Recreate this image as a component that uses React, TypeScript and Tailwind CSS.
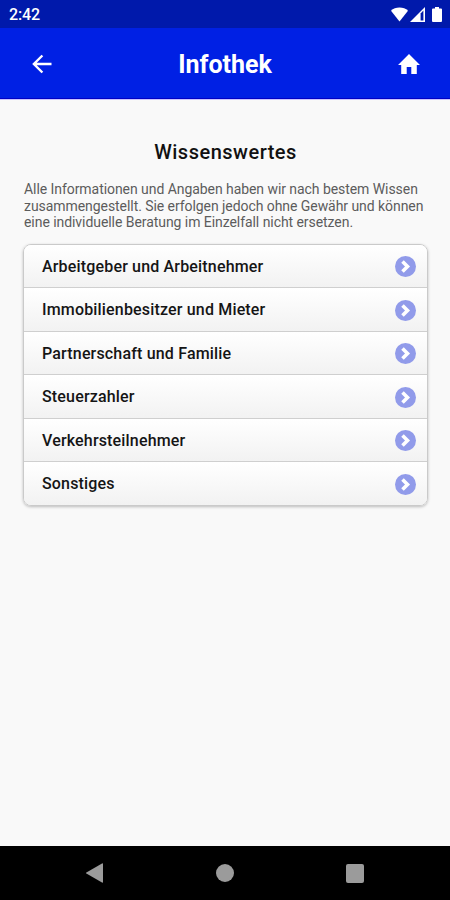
const topics = [
  "Arbeitgeber und Arbeitnehmer",
  "Immobilienbesitzer und Mieter",
  "Partnerschaft und Familie",
  "Steuerzahler",
  "Verkehrsteilnehmer",
  "Sonstiges",
];

function StatusBar() {
  return (
    <div className="flex h-7 items-center justify-between bg-[#0019ab] pl-[9px] pr-2 text-white">
      <span className="mt-0.5 text-base font-medium leading-none tracking-[-0.1px]">2:42</span>
      <div className="flex items-center">
        <svg className="h-[15px] w-[17px]" viewBox="0 0 18 15" fill="currentColor">
          <path d="M0 3.4C2.3 1.2 5.4 0 9 0s6.700 1.200 9 3.400L9 15z" />
        </svg>
        <svg className="ml-0.5 h-[15px] w-[15px]" viewBox="0 0 15 15">
          <path d="M0 15 15 0v15z" fill="currentColor" />
          <path d="M10.600 6.400 13.400 3.600v10h-2.800z" fill="#0019ab" />
        </svg>
        <svg className="ml-[7px] h-[15px] w-[10px]" viewBox="0 0 10 15" fill="currentColor">
          <path d="M3 0h4v1.500h2a1 1 0 0 1 1 1V14a1 1 0 0 1-1 1H1a1 1 0 0 1-1-1V2.500a1 1 0 0 1 1-1h2z" />
        </svg>
      </div>
    </div>
  );
}

function Header() {
  return (
    <header className="flex h-[71px] items-center justify-between border-b border-[#0000c4] bg-[#0020e4] pl-8 pr-[30px] text-white">
      <button className="w-6" aria-label="Zurück">
        <svg className="mt-0.5 h-5 w-5" viewBox="0 0 20 20" fill="none" stroke="currentColor" strokeWidth={2.4}>
          <path d="M10.400 1.500 1.900 10l8.500 8.500M2 10h17.500" />
        </svg>
      </button>
      <h1 className="-ml-1 mt-0.5 text-[25px] font-bold leading-none">Infothek</h1>
      <button className="w-[22px]" aria-label="Startseite">
        <svg className="mt-0.5 h-5 w-[22px]" viewBox="0 0 24 20" preserveAspectRatio="none" fill="currentColor">
          <path d="M9.500 20v-7h5v7h6v-9H24L12 0 0 11h3.500v9z" />
        </svg>
      </button>
    </header>
  );
}

function TopicRow({ label }: { label: string }) {
  return (
    <li className="flex flex-1 items-center justify-between border-b border-[#cfcfcf] bg-linear-to-b from-white to-[#f2f2f2] pl-[18px] pr-[11.5px] pt-0.5 last:border-b-0">
      <span className="text-base font-medium tracking-[0.17px] text-[#151515]">{label}</span>
      <svg className="h-[21px] w-[21px]" viewBox="0 0 21 21">
        <circle cx="10.500" cy="10.500" r="10.500" fill="#919bea" />
        <path d="M7.500 5.500 12.500 10.500 7.500 15.500" fill="none" stroke="white" strokeWidth={3.6} />
      </svg>
    </li>
  );
}

function NavigationBar() {
  return (
    <nav className="flex h-[54px] items-center justify-between bg-black pl-[86px] pr-[86px] text-[#9b9b9b]">
      <svg className="h-5 w-[17px]" viewBox="0 0 17 20" fill="currentColor">
        <path d="M16 .5a.7.7 0 0 1 1 .6v17.800a.7.7 0 0 1-1 .6L.4 10.600a.7.7 0 0 1 0-1.200z" />
      </svg>
      <div className="h-[18px] w-[18px] rounded-full bg-[#9b9b9b]" />
      <div className="h-[19px] w-[18px] rounded-xs bg-[#9b9b9b]" />
    </nav>
  );
}

export default function App() {
  return (
    <div className="flex h-[900px] w-[450px] flex-col bg-[#f9f9f9] font-[Roboto,sans-serif]">
      <StatusBar />
      <Header />
      <main className="flex-1 border-t border-[#c9c2ff] pl-[23px] pr-[22px] pt-[37px]">
        <h2 className="text-center text-xl font-medium leading-[30px] tracking-[0.5px] text-[#111111]">
          Wissenswertes
        </h2>
        <p className="mt-[14px] whitespace-nowrap pl-px text-sm leading-[16.5px] tracking-[-0.06px] text-[#5c5c5c]">
          Alle Informationen und Angaben haben wir nach bestem Wissen
          <br />
          zusammengestellt. Sie erfolgen jedoch ohne Gewähr und können
          <br />
          eine individuelle Beratung im Einzelfall nicht ersetzen.
        </p>
        <ul className="mt-[13px] flex h-[262px] flex-col overflow-hidden rounded-lg border border-[#cacaca] shadow-[0_1px_3px_rgba(0,0,0,0.25)]">
          {topics.map(topic => (
            <TopicRow key={topic} label={topic} />
          ))}
        </ul>
      </main>
      <NavigationBar />
    </div>
  );
}
